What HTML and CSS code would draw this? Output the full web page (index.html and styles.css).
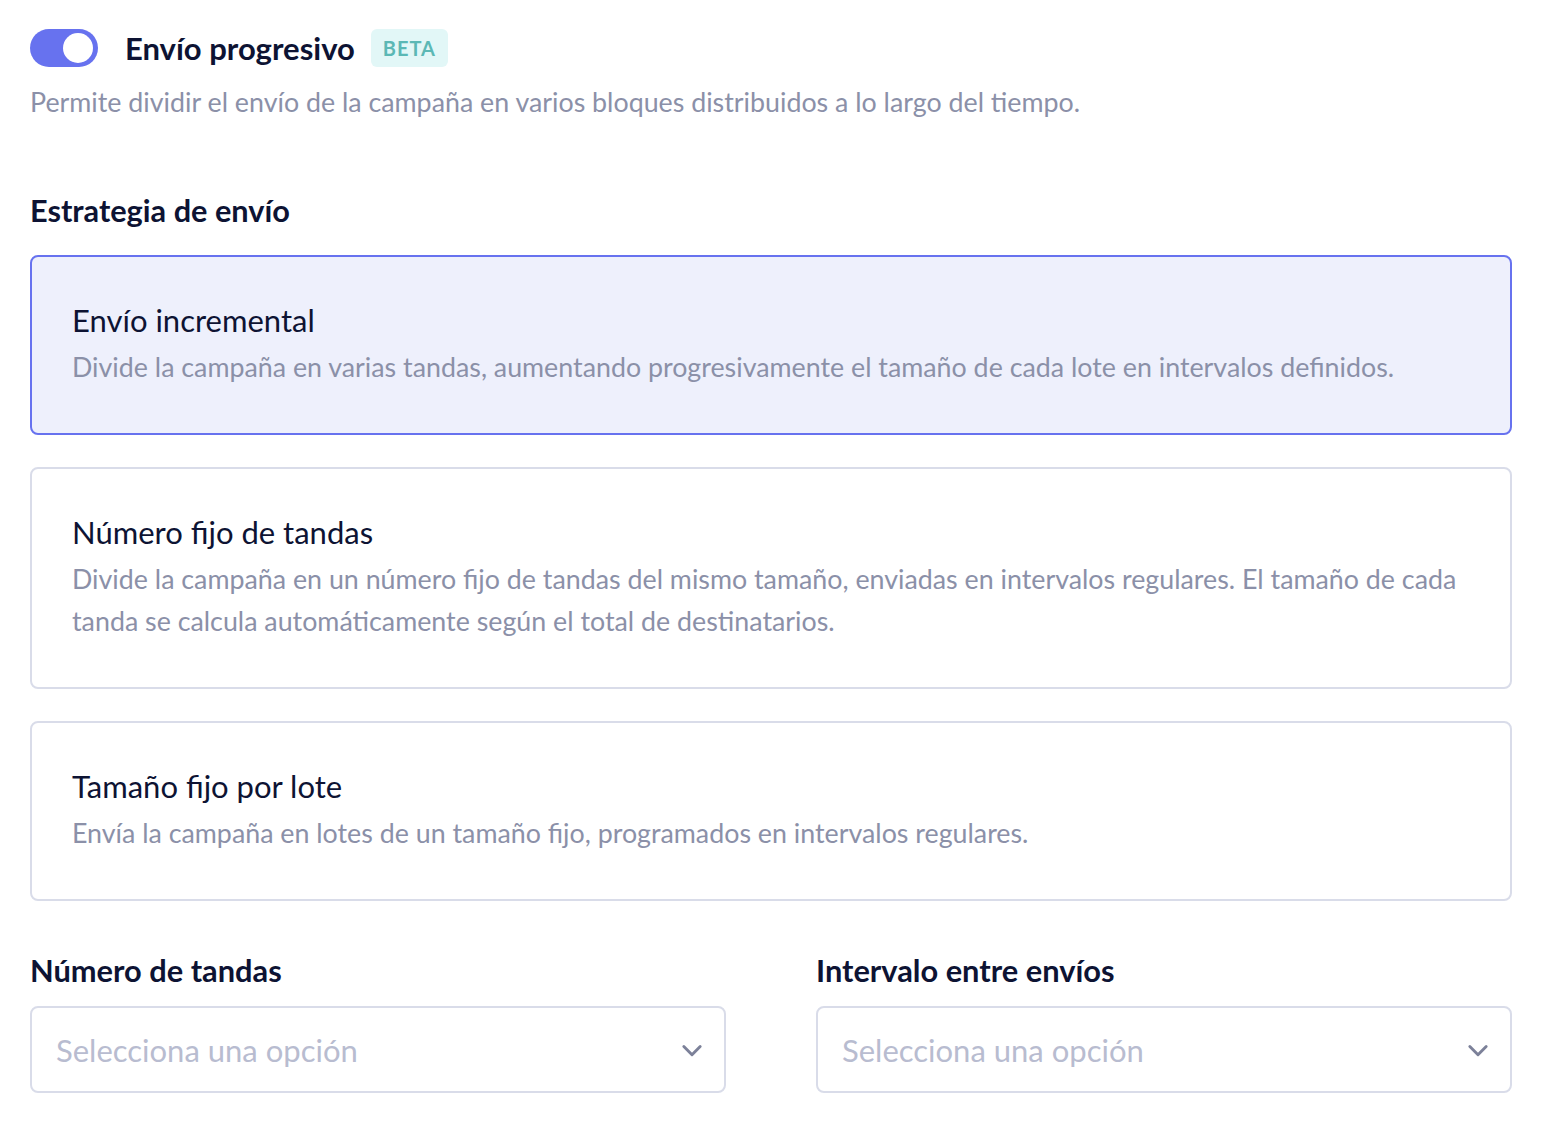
FILE: index.html
```html
<!DOCTYPE html>
<html lang="es">
<head>
    <meta charset="UTF-8">
    <meta name="viewport" content="width=device-width, initial-scale=1.0">
    <title>Envío progresivo</title>
    <link rel="stylesheet" href="styles.css">
</head>
<body>

    <!-- Toggle header -->
    <div class="feature-header">
        <span class="toggle"><span class="toggle-knob"></span></span>
        <h2 class="feature-title">Envío progresivo</h2>
        <span class="badge">BETA</span>
    </div>
    <p class="feature-desc">Permite dividir el envío de la campaña en varios bloques distribuidos a lo largo del tiempo.</p>

    <h3 class="section-title">Estrategia de envío</h3>

    <div class="options">
        <div class="option selected">
            <div class="option-title">Envío incremental</div>
            <div class="option-desc">Divide la campaña en varias tandas, aumentando progresivamente el tamaño de cada lote en intervalos definidos.</div>
        </div>
        <div class="option">
            <div class="option-title">Número fijo de tandas</div>
            <div class="option-desc">Divide la campaña en un número fijo de tandas del mismo tamaño, enviadas en intervalos regulares. El tamaño de cada tanda se calcula automáticamente según el total de destinatarios.</div>
        </div>
        <div class="option">
            <div class="option-title">Tamaño fijo por lote</div>
            <div class="option-desc">Envía la campaña en lotes de un tamaño fijo, programados en intervalos regulares.</div>
        </div>
    </div>

    <!-- Dropdowns -->
    <div class="fields">
        <div class="field">
            <label class="field-label">Número de tandas</label>
            <div class="select">
                <span class="placeholder">Selecciona una opción</span>
                <svg class="chevron" width="28" height="28" viewBox="0 0 24 24" fill="none" stroke="currentColor" stroke-width="2.5" stroke-linecap="round" stroke-linejoin="round"><path d="M5 9l7 7 7-7"/></svg>
            </div>
        </div>
        <div class="field">
            <label class="field-label">Intervalo entre envíos</label>
            <div class="select">
                <span class="placeholder">Selecciona una opción</span>
                <svg class="chevron" width="28" height="28" viewBox="0 0 24 24" fill="none" stroke="currentColor" stroke-width="2.5" stroke-linecap="round" stroke-linejoin="round"><path d="M5 9l7 7 7-7"/></svg>
            </div>
        </div>
    </div>

</body>
</html>
```

FILE: styles.css
```css
/* Global Styles */
body {
    font-family: 'Lato', 'Noto Sans', sans-serif;
    background-color: #fff;
    color: #0d1333;
    margin: 0;
    padding: 27px 40px 40px 30px;
}

.feature-header {
    display: flex;
    align-items: center;
    height: 42px;
}

.toggle {
    width: 68px;
    height: 38px;
    border-radius: 19px;
    background-color: #6772ef;
    display: flex;
    align-items: center;
    justify-content: flex-end;
    padding: 0 5px;
    box-sizing: border-box;
}

.toggle-knob {
    width: 30px;
    height: 30px;
    border-radius: 50%;
    background-color: #fff;
}

.feature-title {
    font-size: 31px;
    font-weight: 700;
    margin: 0 16px 0 27px;
}

.badge {
    background-color: #e2f7f7;
    color: #5bb8b5;
    font-size: 20px;
    font-weight: 700;
    letter-spacing: 1px;
    padding: 7px 12px;
    border-radius: 6px;
}

.feature-desc {
    color: #8b90a8;
    font-size: 26.8px;
    margin: 17px 0 0;
}

.section-title {
    font-size: 30.7px;
    font-weight: 700;
    margin: 74px 0 26px;
}

.options {
    display: flex;
    flex-direction: column;
    gap: 32px;
}

.option {
    border: 2px solid #d9dce9;
    border-radius: 8px;
    padding: 40px 40px 45px;
}

.option.selected {
    border-color: #6772ef;
    background-color: #eef0fc;
}

.option-title {
    font-size: 31px;
    line-height: 46px;
    margin-bottom: 3px;
}

.option-desc {
    color: #8b90a8;
    font-size: 26.8px;
    line-height: 42px;
}

.fields {
    display: grid;
    grid-template-columns: 1fr 1fr;
    gap: 90px;
    margin-top: 51px;
}

.field-label {
    display: block;
    font-size: 30.8px;
    font-weight: 700;
    margin-bottom: 17px;
}

.select {
    display: flex;
    align-items: center;
    justify-content: space-between;
    height: 87px;
    box-sizing: border-box;
    border: 2px solid #d9dce9;
    border-radius: 8px;
    padding: 0 18px 0 24px;
}

.placeholder {
    color: #b8bcd0;
    font-size: 31px;
}

.chevron {
    color: #7c8199;
}
```
